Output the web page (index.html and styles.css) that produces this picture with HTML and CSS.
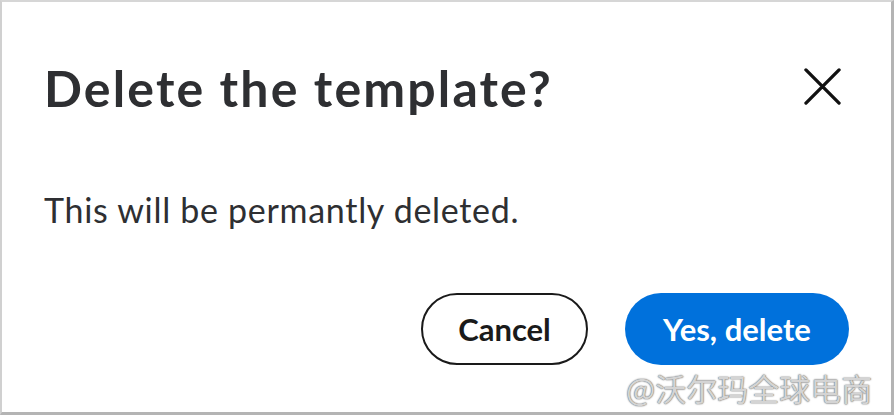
FILE: index.html
```html
<!DOCTYPE html>
<html>
<head>
<meta charset="utf-8">
<link rel="stylesheet" href="styles.css">
</head>
<body>
<div class="frame">
  <div class="dialog">
    <div class="header">
      <h1 class="title">Delete the template?</h1>
      <button class="close" aria-label="Close">
        <svg width="38" height="38" viewBox="0 0 38 38"><path d="M2 2 L36 36 M36 2 L2 36" stroke="#111" stroke-width="3.4" stroke-linecap="round" fill="none"/></svg>
      </button>
    </div>
    <p class="body">This will be permantly deleted.</p>
    <div class="actions">
      <button class="btn btn-outline">Cancel</button>
      <button class="btn btn-primary">Yes, delete</button>
    </div>
  </div>
  <div class="watermark">@沃尔玛全球电商</div>
</div>
</body>
</html>
```
FILE: styles.css
```css
html, body {
  margin: 0;
  padding: 0;
  background: #fff;
}
.frame {
  position: relative;
  box-sizing: border-box;
  width: 894px;
  height: 415px;
  border-top: 2px solid #d6d6d6;
  border-left: 2px solid #d0d0d0;
  border-right: 3px solid #b4b4b4;
  border-bottom: 3px solid #b4b4b4;
  font-family: Lato, "Noto Sans", sans-serif;
  color: #2e2f32;
}
.dialog {
  padding: 0 42px 0 42px;
  display: flex;
  flex-direction: column;
}
.header {
  display: flex;
  align-items: center;
  justify-content: space-between;
  height: 172px;
}
.title {
  margin: 0;
  font-size: 50px;
  font-weight: 700;
  letter-spacing: 2.15px;
}
.close {
  background: none;
  border: none;
  padding: 0;
  margin-right: 8px;
  margin-bottom: 4px;
  width: 37px;
  height: 37px;
  display: flex;
  cursor: pointer;
}
.close svg {
  width: 37px;
  height: 37px;
}
.body {
  margin: 16px 0 0 0;
  font-size: 34px;
  line-height: 40px;
  letter-spacing: 0.7px;
  color: #2e2f32;
}
.actions {
  display: flex;
  justify-content: flex-end;
  gap: 37px;
  margin-top: 63px;
}
.btn {
  font-family: Lato, "Noto Sans", sans-serif;
  font-weight: 700;
  font-size: 31px;
  height: 72px;
  border-radius: 36px;
  cursor: pointer;
  padding: 0;
}
.btn-outline {
  width: 167px;
  background: #fff;
  border: 2px solid #1a1a1a;
  color: #1a1a1a;
}
.btn-primary {
  width: 224px;
  background: #0071dc;
  border: none;
  color: #fff;
}
.watermark {
  position: absolute;
  left: 624px;
  top: 367px;
  font-family: "Noto Sans CJK SC", sans-serif;
  font-size: 31px;
  line-height: 38px;
  color: #d4d4d4;
  text-shadow: 0 0 1px #666, 0 0 2px #888;
  white-space: nowrap;
}
```
